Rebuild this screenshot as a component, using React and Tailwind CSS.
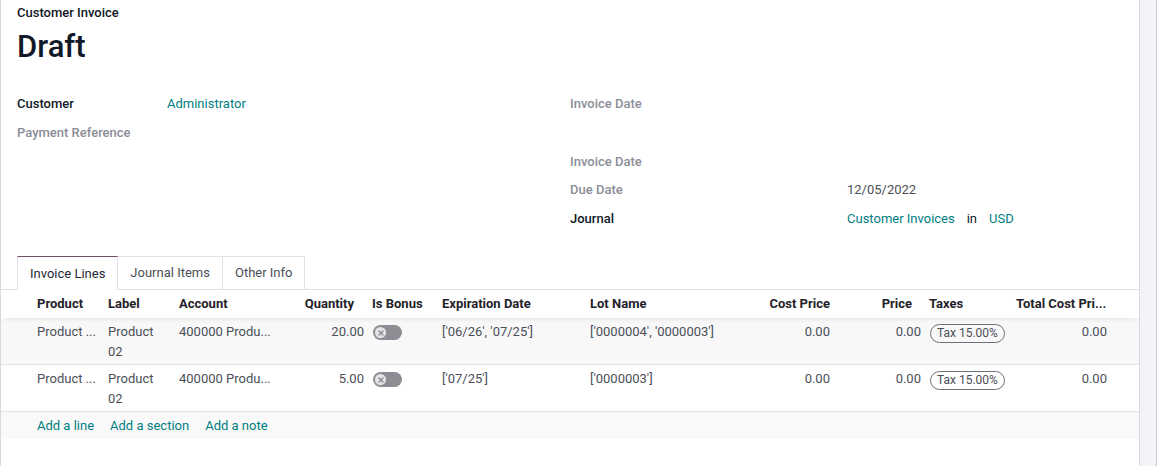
import { X } from 'lucide-react'

const COLS = [
  { key: 'handle', w: 32 },
  { key: 'product', label: 'Product', w: 71 },
  { key: 'label', label: 'Label', w: 71 },
  { key: 'account', label: 'Account', w: 105 },
  { key: 'qty', label: 'Quantity', w: 88, num: true, hpr: 'pr-[14px]' },
  { key: 'bonus', label: 'Is Bonus', w: 70 },
  { key: 'exp', label: 'Expiration Date', w: 148 },
  { key: 'lot', label: 'Lot Name', w: 154 },
  { key: 'cost', label: 'Cost Price', w: 94, num: true, hpr: 'pr-[4px]' },
  { key: 'price', label: 'Price', w: 91, num: true, hpr: 'pr-[13px]' },
  { key: 'taxes', label: 'Taxes', w: 87 },
  { key: 'total', label: 'Total Cost Pri...', w: 99 },
  { key: 'trash', w: 28 },
]

const LINES = [
  { qty: '20.00', exp: "['06/26', '07/25']", lot: "['0000004', '0000003']", bg: 'bg-[#f8f8f8]' },
  { qty: '5.00', exp: "['07/25']", lot: "['0000003']", bg: 'bg-white' },
]

function Field({ label, muted, labelW, children }) {
  return (
    <div className="flex items-center h-[28.7px]">
      <div
        className={`${labelW} shrink-0 font-medium ${muted ? 'text-[#8b8e97]' : 'text-[#111827]'}`}
      >
        {label}
      </div>
      <div className="text-[#4b4f58]">{children}</div>
    </div>
  )
}

function Toggle() {
  return (
    <span className="inline-flex items-center w-[29px] h-[15px] rounded-full bg-[#8c8e93] pl-[2px] align-top">
      <span className="w-[11px] h-[11px] rounded-full bg-[#e4e5e8] flex items-center justify-center">
        <X size={8} strokeWidth={4} className="text-[#8c8e93]" />
      </span>
    </span>
  )
}

function TaxBadge() {
  return (
    <span className="inline-flex items-center h-[19px] px-[6px] rounded-full border border-[#6c7078] text-[12px] text-[#4b4f58] leading-none">
      Tax 15.00%
    </span>
  )
}

export default function App() {
  return (
    <div className="flex h-[466px] bg-white text-[13px] leading-[20px]" style={{ fontFamily: 'Roboto, "Noto Sans", sans-serif' }}>
      <div className="w-[1140px] shrink-0 border-x border-[#d8dadd] flex flex-col">
        <div className="px-4">
          <div className="pt-[3px] font-medium text-[#111827]">Customer Invoice</div>
          <h1 className="mt-[5px] text-[31px] leading-[37px] font-medium text-[#111827]">Draft</h1>

          <div className="grid grid-cols-2 mt-[25px]">
            <div>
              <Field label="Customer" labelW="w-[150px]">
                <span className="text-[#017e84]">Administrator</span>
              </Field>
              <Field label="Payment Reference" muted labelW="w-[150px]" />
            </div>
            <div>
              <Field label="Invoice Date" muted labelW="w-[277px]" />
              <div className="h-[28.7px]" />
              <Field label="Invoice Date" muted labelW="w-[277px]" />
              <Field label="Due Date" muted labelW="w-[277px]">12/05/2022</Field>
              <Field label="Journal" labelW="w-[277px]">
                <span className="text-[#017e84]">Customer Invoices</span>
                <span className="text-[#111827] mx-[12px]">in</span>
                <span className="text-[#017e84]">USD</span>
              </Field>
            </div>
          </div>
        </div>

        <div className="mt-[23px] pl-4 flex border-b border-[#dee2e6] h-[34px]">
          <div className="px-[12px] flex items-center border-x border-t-[1.5px] border-[#dee2e6] border-t-[#714b67] bg-white text-[#1f2937] -mb-px">
            Invoice Lines
          </div>
          <div className="px-[12px] flex items-center border border-l-0 border-[#dee2e6] text-[#4b4f58] -mb-px">
            Journal Items
          </div>
          <div className="px-[12px] flex items-center border border-l-0 border-[#dee2e6] text-[#4b4f58] -mb-px">
            Other Info
          </div>
        </div>

        <table className="table-fixed w-[1138px] border-collapse">
          <colgroup>
            {COLS.map((c) => (
              <col key={c.key} style={{ width: c.w }} />
            ))}
          </colgroup>
          <thead>
            <tr className="h-[28px] shadow-[0_3px_5px_-2px_rgba(0,0,0,0.08)] relative">
              {COLS.map((c) => (
                <th
                  key={c.key}
                  className={`px-1 font-bold text-[#1f2229] whitespace-nowrap overflow-hidden ${c.num ? `text-right ${c.hpr}` : 'text-left'}`}
                >
                  {c.label}
                </th>
              ))}
            </tr>
          </thead>
          <tbody className="text-[#4b4f58]">
            {LINES.map((l, i) => (
              <tr key={i} className={`${l.bg} border-b border-[#e2e4e8] align-top leading-[19.5px]`}>
                <td />
                <td className="px-1 pt-1 pb-[3px] whitespace-nowrap">Product ...</td>
                <td className="px-1 pt-1 pb-[3px]">Product 02</td>
                <td className="px-1 pt-1 pb-[3px] whitespace-nowrap">400000 Produ...</td>
                <td className="px-1 pt-1 pb-[3px] text-right">{l.qty}</td>
                <td className="pl-[5px] pr-1 pt-[7px]">
                  <Toggle />
                </td>
                <td className="px-1 pt-1 whitespace-nowrap">{l.exp}</td>
                <td className="px-1 pt-1 whitespace-nowrap">{l.lot}</td>
                <td className="px-1 pt-1 text-right">0.00</td>
                <td className="px-1 pt-1 text-right">0.00</td>
                <td className="pl-[5px] pr-1 pt-[5px]">
                  <TaxBadge />
                </td>
                <td className="px-1 pt-1 text-right">0.00</td>
                <td />
              </tr>
            ))}
            <tr className="bg-[#f9f9f9] h-[27px]">
              <td />
              <td colSpan={12} className="px-1">
                <div className="flex gap-[16px] text-[#017e84]">
                  <span>Add a line</span>
                  <span>Add a section</span>
                  <span>Add a note</span>
                </div>
              </td>
            </tr>
          </tbody>
        </table>
      </div>
      <div className="w-[17px] shrink-0 bg-[#f3f4f8] border-r border-[#c9cbd1]" />
      <div className="flex-1 bg-white" />
    </div>
  )
}
